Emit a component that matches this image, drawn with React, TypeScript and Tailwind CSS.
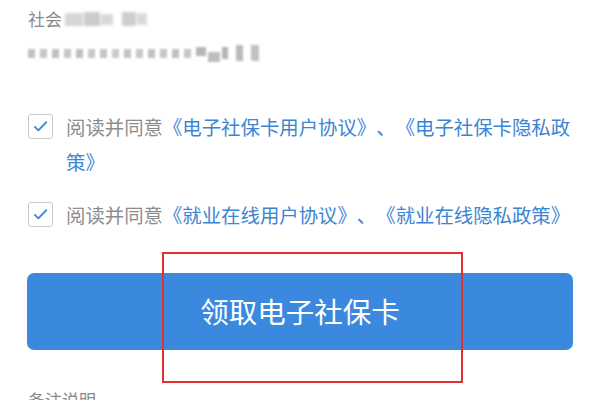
import * as React from 'react';

// Blurred card number: mosaic squares, darker at the tail like the masked digits.
const digitShades = [
  'bg-[#c2c2c2]', 'bg-[#c6c6c6]', 'bg-[#c0c0c0]', 'bg-[#c5c5c5]', 'bg-[#bfbfbf]',
  'bg-[#c9c9c9]', 'bg-[#c4c4c4]', 'bg-[#cacaca]', 'bg-[#c3c3c3]', 'bg-[#c8c8c8]',
  'bg-[#c1c1c1]', 'bg-[#c6c6c6]', 'bg-[#c0c0c0]', 'bg-[#c5c5c5]',
];

function Checkbox() {
  return (
    <span className="flex h-[25px] w-[25px] shrink-0 items-center justify-center rounded-[3px] border border-[#c9c9c9] bg-white">
      <svg viewBox="0 0 24 24" className="h-[17px] w-[17px]" fill="none">
        <path d="M4 12.5l5 5L20 6" stroke="#3d89d6" strokeWidth="2.6" strokeLinecap="round" strokeLinejoin="round" />
      </svg>
    </span>
  );
}

function Agreement({ children }: { children: React.ReactNode }) {
  return (
    <div className="flex items-start gap-[13px]">
      <div className="pt-[5px]">
        <Checkbox />
      </div>
      <p className="w-[515px] text-[19.4px] leading-[35px] text-[#8d8d8d] [text-spacing-trim:space-all]">{children}</p>
    </div>
  );
}

export default function App() {
  return (
    <div className="relative h-[400px] w-[600px] overflow-hidden bg-white font-['Noto_Sans_CJK_SC','Noto_Sans',sans-serif]">
      {/* masked social security number */}
      <div className="flex flex-col pl-[28px] pt-[8px]">
        <div className="flex h-[22px] items-center text-[17px] leading-[22px] text-[#8a8a8a]">
          <span>社会</span>
          <span className="ml-[3px] flex items-center gap-[1px] blur-[1.5px]">
            <span className="h-[13px] w-[18px] bg-[#d6d6d6]" />
            <span className="h-[14px] w-[16px] bg-[#cbcbcb]" />
            <span className="h-[11px] w-[12px] bg-[#d8d8d8]" />
            <span className="ml-[8px] h-[14px] w-[14px] bg-[#cdcdcd]" />
            <span className="h-[12px] w-[10px] bg-[#dadada]" />
          </span>
        </div>
        <div className="mt-[13px] flex h-[20px] items-center gap-[5px] blur-[1.2px]">
          {digitShades.map((c, i) => (
            <span key={i} className={`h-[9px] w-[7px] ${c}`} />
          ))}
          <span className="flex h-[20px] items-center gap-[2px]">
            <span className="mb-[4px] h-[9px] w-[10px] bg-[#b7b7b7]" />
            <span className="mt-[8px] h-[10px] w-[12px] bg-[#bdbdbd]" />
            <span className="h-[12px] w-[6px] bg-[#b4b4b4]" />
            <span className="ml-[6px] h-[16px] w-[7px] bg-[#bababa]" />
            <span className="ml-[6px] h-[16px] w-[8px] bg-[#c2c2c2]" />
          </span>
        </div>
      </div>

      {/* agreements */}
      <div className="mt-[46px] flex flex-col gap-[18px] pl-[28px]">
        <Agreement>
          阅读并同意<span className="text-[#3b85d3]">《电子社保卡用户协议》、《电子社保卡隐私政策》</span>
        </Agreement>
        <Agreement>
          阅读并同意<span className="text-[#3b85d3]">《就业在线用户协议》、《就业在线隐私政策》</span>
        </Agreement>
      </div>

      <button className="mx-[27px] mt-[41px] flex h-[77px] w-[546px] items-center justify-center rounded-[7px] bg-[#3a89df] text-[28.5px] text-white">
        领取电子社保卡
      </button>

      <div className="mt-[39px] pl-[28px] text-[17px] leading-[22px] text-[#8a8a8a]">备注说明</div>

      {/* red highlight annotation */}
      <div className="absolute left-[162px] top-[252px] h-[131px] w-[301px] border-2 border-[#e2302e]" />
    </div>
  );
}
